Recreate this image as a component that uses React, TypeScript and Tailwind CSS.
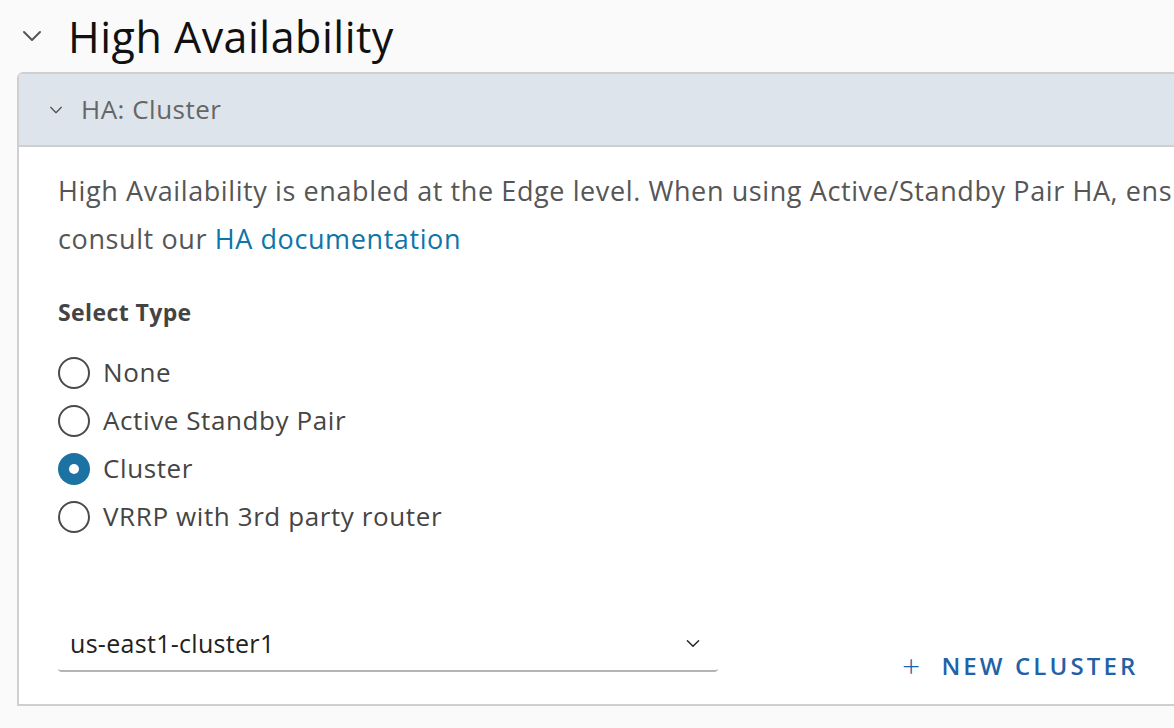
const font = { fontFamily: '"Open Sans", "Noto Sans", sans-serif' };

function Chevron({ className }: { className?: string }) {
  return (
    <svg viewBox="0 0 20 12" className={className} fill="none" stroke="currentColor" strokeWidth={2} strokeLinecap="round" strokeLinejoin="round">
      <path d="M2 2 L10 10 L18 2" />
    </svg>
  );
}

type RadioProps = { label: string; checked?: boolean };

function Radio({ label, checked }: RadioProps) {
  return (
    <label className="flex h-[48px] items-center gap-[13px]">
      {checked ? (
        <span className="flex h-[32px] w-[32px] items-center justify-center rounded-full bg-[#1b72a3]">
          <span className="h-[10px] w-[10px] rounded-full bg-white" />
        </span>
      ) : (
        <span className="h-[32px] w-[32px] rounded-full border-2 border-[#4a4a4a] bg-white" />
      )}
      <span className="text-[26px] tracking-[0.6px] text-[#454545]">{label}</span>
    </label>
  );
}

export default function App() {
  return (
    <div className="h-[728px] w-[1174px] overflow-hidden bg-[#fafafa]" style={font}>
      <div className="flex h-[72px] items-center">
        <Chevron className="ml-[22px] h-[12px] w-[20px] text-[#555]" />
        <h1 className="ml-[26px] text-[43px] leading-none tracking-[0.5px] text-[#111]">High Availability</h1>
      </div>

      <section className="ml-[17px] w-[1300px] rounded-tl-[6px] border-2 border-[#cfcfcf] bg-white">
        <div className="flex h-[73px] items-center border-b-2 border-[#cfcfcf] bg-[#dde4eb] pl-[30px]">
          <Chevron className="h-[8px] w-[14px] text-[#555]" />
          <span className="ml-[18px] text-[26px] font-medium tracking-[0.5px] text-[#666]">HA: Cluster</span>
        </div>

        <div className="pl-[39px] pt-[20px] pb-[32px]">
          <p className="text-[27px] leading-[48px] tracking-[0.6px] text-[#565656]">
            <span className="block whitespace-nowrap">
              High Availability is enabled at the Edge level. When using Active/Standby Pair HA, ensure both Edges are online.
            </span>
            <span className="block">
              consult our <a className="text-[#0f75a8]">HA documentation</a>
            </span>
          </p>

          <h3 className="mt-[32px] text-[23px] font-bold tracking-[0.4px] text-[#444]">Select Type</h3>

          <div className="mt-[19px] flex flex-col">
            <Radio label="None" />
            <Radio label="Active Standby Pair" />
            <Radio label="Cluster" checked />
            <Radio label="VRRP with 3rd party router" />
          </div>

          <div className="mt-[81px] flex h-[50px]">
            <div className="flex h-[50px] w-[660px] items-center justify-between rounded-b-[4px] border-b-2 border-[#b4b4b4] pb-[4px] pl-[12px] pr-[18px]">
              <span className="text-[25px] tracking-[0.3px] text-[#222]">us-east1-cluster1</span>
              <Chevron className="h-[9px] w-[14px] text-[#222]" />
            </div>
            <button className="ml-[184px] mb-[-6px] flex h-[24px] items-center gap-[18px] self-end text-[24px] font-semibold leading-none tracking-[0.13em] text-[#1f62a8]">
              <span className="text-[32px] font-light leading-none">+</span>
              NEW CLUSTER
            </button>
          </div>
        </div>
      </section>
    </div>
  );
}
